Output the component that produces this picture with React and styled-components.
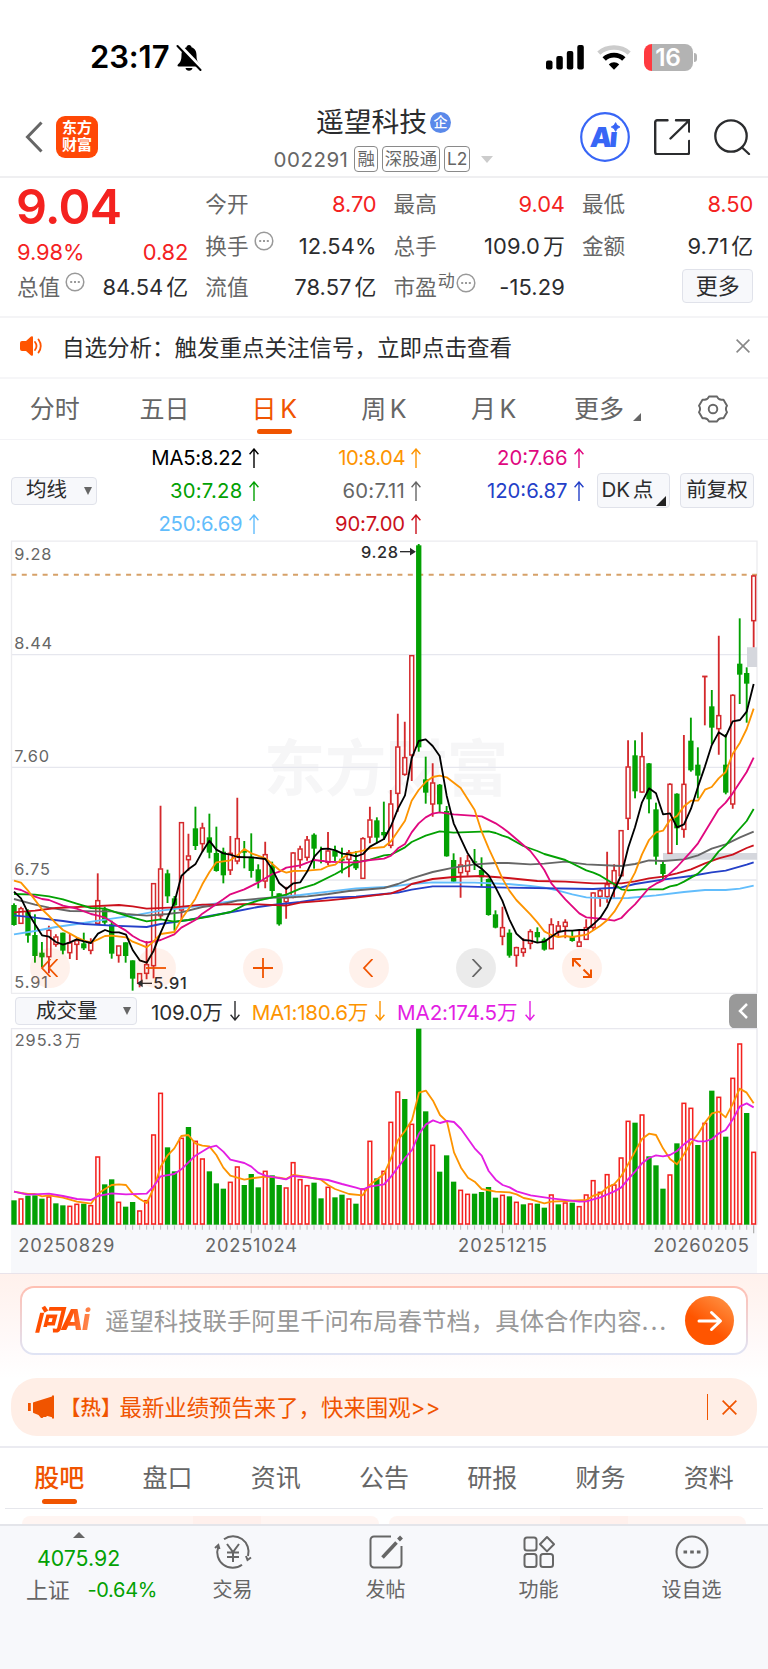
import React from "react";
import styled, { createGlobalStyle } from "styled-components";

const Global = createGlobalStyle`
  *, *::before, *::after { box-sizing: border-box; }
  body {
    margin: 0;
    background: #fff;
    color: #2b2c2e;
    font-family: Inter, "Noto Sans CJK SC", sans-serif;
  }
  svg { display: block; flex: none; }
`;

const RED = "#f4221f";
const GREEN = "#03a103";
const ORANGE = "#f05400";

const Page = styled.div`
  width: 768px;
  height: 1669px;
  overflow: hidden;
  display: flex;
  flex-direction: column;
  background: #fff;
`;

/* ---------- status bar ---------- */
const StatusBar = styled.div`
  height: 100px;
  padding: 14px 71px 0 90px;
  display: flex;
  align-items: center;
  justify-content: space-between;
`;
const StatusSide = styled.div`
  display: flex;
  align-items: center;
  gap: ${(p) => p.$gap}px;
`;
const Clock = styled.span`
  font-size: 31px;
  font-weight: 600;
  color: #000;
  letter-spacing: -0.1px;
  margin-top: -1px;
`;
const Battery = styled.div`
  width: 49px;
  height: 27px;
  border-radius: 8px;
  background: linear-gradient(90deg, #ff3a40 8px, #b3b3b3 8px);
  color: #fff;
  font-size: 24.5px;
  font-weight: 600;
  line-height: 27px;
  text-align: center;
  letter-spacing: -0.3px;
`;
const BatteryCap = styled.div`
  width: 3px;
  height: 9px;
  margin-left: 1.5px;
  border-radius: 0 3px 3px 0;
  background: #b3b3b3;
`;

/* ---------- header ---------- */
const Header = styled.header`
  height: 78px;
  padding: 0 17px 0 25px;
  border-bottom: 2px solid #efeff1;
  display: grid;
  grid-template-columns: 230px 1fr 230px;
`;
const HeaderSide = styled.div`
  display: flex;
  align-items: center;
  gap: ${(p) => p.$gap}px;
  justify-content: ${(p) => (p.$end ? "flex-end" : "flex-start")};
  padding-bottom: 2px;
`;
const Logo = styled.div`
  width: 42px;
  height: 42px;
  border-radius: 9px;
  background: #ff4806;
  color: #fff;
  font-size: 15px;
  line-height: 17px;
  font-weight: 700;
  display: flex;
  flex-direction: column;
  align-items: center;
  justify-content: center;
  padding-bottom: 2px;
`;
const TitleBlock = styled.div`
  display: flex;
  flex-direction: column;
  align-items: center;
  margin: 0 2px 0 -7px;
`;
const TitleLine = styled.div`
  height: 44px;
  display: flex;
  align-items: center;
  gap: 3px;
`;
const Title = styled.h1`
  margin: 0;
  font-size: 27.8px;
  font-weight: 400;
  line-height: 44px;
`;
const Badge = styled.span`
  width: 21px;
  height: 21px;
  border-radius: 50%;
  background: #5a89ea;
  color: #fff;
  font-size: 14px;
  font-weight: 500;
  line-height: 20px;
  text-align: center;
`;
const CodeLine = styled.div`
  height: 30px;
  display: flex;
  align-items: center;
  gap: 4px;
  color: #666;
`;
const Code = styled.span`
  font-size: 20.5px;
  letter-spacing: 0.5px;
  margin-right: 2px;
`;
const Tag = styled.span`
  height: 26px;
  padding: 0 2px;
  border: 1.5px solid #8a8a8a;
  border-radius: 4px;
  font-size: 17.4px;
  line-height: 23px;
`;

/* ---------- quote ---------- */
const Quote = styled.section`
  height: 140px;
  padding: 5px 15px 0 17px;
  border-bottom: 2px solid #f4f4f6;
  display: grid;
  grid-template-columns: repeat(4, 171.3px);
  column-gap: 17px;
`;
const QuoteCol = styled.div`
  display: flex;
  flex-direction: column;
`;
const Price = styled.div`
  height: 50px;
  font-size: 48.5px;
  font-weight: 600;
  line-height: 48px;
  margin-left: -1px;
  color: ${RED};
  letter-spacing: -0.7px;
`;
const QuoteRow = styled.div`
  height: ${(p) => p.$h || 42}px;
  display: flex;
  align-items: center;
  justify-content: space-between;
  white-space: nowrap;
`;
const Label = styled.span`
  display: flex;
  align-items: center;
  gap: 5px;
  font-size: 21.6px;
  line-height: 30px;
  color: #666;
`;
const Raised = styled.span`
  display: flex;
  align-items: center;
  gap: 1px;
  font-size: 17px;
  margin: -12px 0 0 -4px;
`;
const Value = styled.span`
  font-size: 21.9px;
  line-height: 30px;
  letter-spacing: ${(p) => (p.$up ? -0.1 : 0.1)}px;
  color: ${(p) => (p.$up ? RED : "#2b2c2e")};
`;
const Unit = styled.span`
  margin-left: 3px;
`;
const SoftButton = styled.button`
  font: inherit;
  color: #2b2c2e;
  width: ${(p) => p.$w}px;
  height: ${(p) => p.$h}px;
  padding: 0 ${(p) => p.$px || 0}px;
  border: 1.5px solid #e0e2ea;
  border-radius: 4px;
  background: #f7f8fb;
  font-size: ${(p) => p.$size}px;
  line-height: 1;
  word-spacing: -3px;
  display: flex;
  align-items: center;
  justify-content: ${(p) => p.$justify || "center"};
  white-space: nowrap;
`;

/* ---------- notice ---------- */
const Notice = styled.section`
  height: 61px;
  padding: 0 18px 3px 20px;
  border-bottom: 2px solid #f6f6f8;
  display: flex;
  align-items: center;
`;
const NoticeText = styled.p`
  margin: 0 auto 0 19px;
  font-size: 22.5px;
`;

/* ---------- tabs ---------- */
const Tabs = styled.nav`
  height: ${(p) => p.$h}px;
  margin: 0 ${(p) => p.$inset || 0}px;
  border-bottom: 1.5px solid ${(p) => p.$line};
  display: grid;
  grid-template-columns: repeat(7, 1fr);
`;
const Tab = styled.div`
  display: flex;
  flex-direction: column;
  align-items: center;
  justify-content: flex-end;
  gap: ${(p) => p.$gap}px;
  padding-bottom: ${(p) => p.$pb}px;
  font-size: 25px;
  line-height: 36px;
  color: ${(p) => (p.$on ? ORANGE : "#666")};
  font-weight: ${(p) => (p.$on && p.$strong ? 500 : 400)};
  &::after {
    content: "";
    width: 35px;
    height: 5.5px;
    border-radius: 2.5px;
    background: ${(p) => (p.$on ? ORANGE : "transparent")};
  }
`;
const TabLabel = styled.span`
  display: flex;
  align-items: center;
  justify-content: center;
  height: 36px;
  word-spacing: -3.5px;
  padding-left: ${(p) => p.$shift || 0}px;
`;

/* ---------- moving averages ---------- */
const Averages = styled.section`
  height: 100px;
  padding: 1px 14px 0 11px;
  display: flex;
  align-items: center;
`;
const AverageGrid = styled.div`
  display: grid;
  grid-template-columns: 161.5px 162.5px 162.5px;
  grid-auto-rows: 33px;
  margin-right: 13.5px;
`;
const Average = styled.div`
  display: flex;
  align-items: center;
  justify-content: flex-end;
  gap: 6px;
  font-size: 20.3px;
  letter-spacing: ${(p) => p.$ls}px;
  color: ${(p) => p.$c};
`;
const ButtonPair = styled.div`
  display: flex;
  gap: 10px;
`;

/* ---------- chart ---------- */
const ChartBox = styled.section`
  position: relative;
  height: 454px;
`;
const ChartControls = styled.div`
  position: absolute;
  left: 30px;
  bottom: 6px;
  display: flex;
  gap: 66.4px;
`;
const RoundControl = styled.div`
  width: 40px;
  height: 40px;
  border-radius: 50%;
  background: ${(p) => (p.$muted ? "rgba(0,0,0,.08)" : "rgba(255,80,0,.08)")};
  color: ${(p) => (p.$muted ? "#666" : ORANGE)};
  display: flex;
  align-items: center;
  justify-content: center;
`;
const VolumeBar = styled.div`
  height: 34px;
  padding-left: 15px;
  margin-right: 11px;
  display: flex;
  align-items: center;
  font-size: 20.6px;
`;
const VolumeStat = styled.span`
  display: flex;
  align-items: center;
  gap: 7px;
  margin-left: ${(p) => p.$ml}px;
  color: ${(p) => p.$c};
  letter-spacing: ${(p) => p.$ls || 0}px;
  white-space: nowrap;
`;
const Collapse = styled.div`
  width: 28px;
  height: 35px;
  margin-left: auto;
  border-radius: 7px 0 0 7px;
  background: #999;
  display: flex;
  align-items: center;
  justify-content: center;
`;

/* ---------- ask ai ---------- */
const AskSection = styled.section`
  height: 105px;
  padding: 12px 20px 0;
  border-top: 1.5px solid #e9e3ea;
  background: linear-gradient(180deg, #fff1ec 0%, #fffafa 70%, #fff 100%);
`;
const AskBorder = styled.div`
  height: 69px;
  padding: 2px;
  border-radius: 14px;
  background: linear-gradient(180deg, #ffbfb2, #dfe4f5);
`;
const AskBox = styled.div`
  height: 65px;
  border-radius: 12px;
  background: #fff;
  padding: 0 12px;
  display: flex;
  align-items: center;
`;
const AskLogo = styled.span`
  width: 59px;
  font-size: 28.5px;
  line-height: 40px;
  margin-top: -1px;
  font-weight: 800;
  font-style: italic;
  letter-spacing: -1.2px;
  background: linear-gradient(100deg, #ff4e00 55%, #ff9a6a);
  background-clip: text;
  -webkit-text-fill-color: transparent;
  white-space: nowrap;
`;
const AskText = styled.span`
  margin: -3px auto 0 12px;
  font-size: 24.4px;
  color: #999;
  white-space: nowrap;
`;
const Dots = styled.span`
  letter-spacing: 1.8px;
`;
const SendButton = styled.div`
  width: 49px;
  height: 49px;
  border-radius: 50%;
  background: linear-gradient(215deg, #ff9a4d 0%, #ff5500 60%);
  display: flex;
  align-items: center;
  justify-content: center;
`;

/* ---------- hot banner ---------- */
const HotBanner = styled.section`
  height: 58px;
  margin: 0 11px 10px;
  padding: 0 20px 0 17px;
  border-radius: 26px;
  background: #ffeee6;
  color: ${ORANGE};
  font-size: 22.4px;
  display: flex;
  align-items: center;
`;
const HotTag = styled.span`
  margin: -2px 0 0 5px;
  font-weight: 500;
  font-size: 20.5px;
`;
const HotText = styled.span`
  margin: -2px auto 0 -2px;
`;
const Divider = styled.i`
  width: 1.5px;
  height: 26px;
  margin-right: 14px;
  background: ${ORANGE};
`;
const TabsTop = styled.div`
  border-top: 2px solid #ebebf1;
`;
const CardStrip = styled.div`
  height: 15px;
  padding: 7px 22px 0;
  display: grid;
  grid-template-columns: 1fr 1fr;
  gap: 10px;
`;
const CardTop = styled.div`
  border-radius: 12px 12px 0 0;
  background: linear-gradient(90deg, #fff5f2 48%, #fff0ec 48% 67%, #fff5f2 67%);
`;

/* ---------- bottom nav ---------- */
const BottomNav = styled.nav`
  flex: 1;
  border-top: 2px solid #e4e5ea;
  background: #f7f8fb;
  display: grid;
  grid-template-columns: 156px repeat(4, 153px);
`;
const IndexCell = styled.div`
  padding: 6px 0 0 26px;
  color: ${GREEN};
  font-size: 21.3px;
  white-space: nowrap;
`;
const IndexArrow = styled.div`
  height: 6px;
  width: 106px;
  display: flex;
  justify-content: center;
`;
const IndexValue = styled.div`
  padding-left: 11px;
  line-height: 40px;
`;
const IndexChange = styled.div`
  display: flex;
  gap: 18px;
  line-height: 24px;
  font-size: 20px;
  letter-spacing: -0.3px;
  span { color: #666; font-size: 22px; }
`;
const NavItem = styled.div`
  padding-top: 8px;
  display: flex;
  flex-direction: column;
  align-items: center;
  gap: 4px;
  font-size: 20px;
  line-height: 32px;
  color: #666;
`;

/* ---------- small drawings ---------- */
const Line = ({ w, h, vb, d, sw = 2, color = "currentColor", children, ...rest }) => (
  <svg width={w} height={h} viewBox={vb || `0 0 ${w} ${h}`} fill="none" stroke={color} strokeWidth={sw} {...rest}>
    {d && <path d={d} />}
    {children}
  </svg>
);
const RaisedDots = styled(Line)`
  margin-top: ${(p) => p.$top}px;
`;
const MoreDots = ({ top = -10 }) => (
  <RaisedDots w={20} h={20} sw={1.5} color="#999" $top={top}>
    <circle cx="10" cy="10" r="8.8" />
    <path d="M5.2 10h2M9 10h2M12.8 10h2" strokeWidth="2" />
  </RaisedDots>
);
const Close = ({ s = 14, color = "#888", sw = 1.6 }) => (
  <Line w={s} h={s} vb="0 0 14 14" sw={sw} color={color} d="M.6.6l12.8 12.8M13.4.6L.6 13.4" />
);
const Arrow = ({ down }) => (
  <Line w={10} h={20} sw={1.4} d={down ? "M5 0v19M.6 13.8L5 19l4.4-5.2" : "M5 20V1M.6 6.2L5 1l4.4 5.2"} />
);
const CaretSvg = styled.svg`
  margin-right: ${(p) => p.$pull}px;
`;
const Caret = ({ pull }) => (
  <CaretSvg $pull={pull} width="8" height="8" viewBox="0 0 8 8"><path d="M0 0h8L4 8z" fill="#666" /></CaretSvg>
);
const CornerSvg = styled.svg`
  margin: ${(p) => p.$m};
`;
const Corner = ({ s, m, color }) => (
  <CornerSvg $m={m} width={s} height={s} viewBox="0 0 10 10"><path d="M10 0v10H0z" fill={color} /></CornerSvg>
);

/* ---------- chart data: [up, high, bodyTop, bodyBottom, low] ---------- */
const candles = [
  [0,1120,1125,1185,1187],[1,1130,1135,1180,1180],[0,1138,1145,1217,1238],[0,1153,1215,1278,1298],[0,1236,1268,1282,1312],
  [1,1187,1200,1280,1330],[1,1213,1220,1243,1250],[0,1208,1208,1262,1273],[1,1210,1238,1268,1287],[1,1225,1231,1243,1290],
  [0,1208,1240,1255,1260],[1,1225,1237,1261,1273],[1,1030,1111,1180,1180],[0,1130,1138,1178,1185],[0,1172,1183,1271,1286],
  [1,1247,1247,1276,1298],[0,1237,1237,1278,1298],[0,1291,1291,1346,1382],[1,1330,1330,1360,1372],[1,1233,1303,1330,1348],
  [1,1060,1060,1307,1345],[1,827,1016,1157,1168],[0,1019,1030,1099,1119],[0,1098,1105,1126,1202],[1,877,877,1140,1175],
  [1,911,977,989,1022],[0,830,895,948,960],[1,878,893,941,965],[0,851,922,968,985],[0,890,969,1023,1025],
  [0,953,965,1036,1060],[1,918,969,1020,1035],[1,803,925,993,1003],[0,933,962,968,1015],[0,910,980,1023,1043],
  [0,1003,1018,1055,1075],[1,935,973,1053,1075],[0,995,1007,1083,1100],[0,1090,1090,1183,1187],[1,1070,1103,1115,1166],
  [1,966,968,1102,1105],[1,947,956,989,1015],[1,918,929,982,992],[0,910,914,956,1016],[0,950,990,994,1000],
  [1,906,962,997,1005],[0,947,962,980,993],[0,953,986,992,1030],[1,960,967,988,1042],[0,963,990,1015,1020],
  [1,922,925,1045,1047],[1,830,869,921,940],[0,862,871,923,940],[0,815,906,916,930],[1,780,821,946,955],
  [1,551,650,790,845],[1,575,682,733,737],[1,375,376,675,753],[0,42,46,652,665],[0,680,748,788,821],
  [1,700,758,822,860],[0,762,764,823,848],[0,828,843,979,980],[0,970,990,1055,1058],[1,982,1004,1028,1103],
  [1,975,992,1024,1037],[0,957,994,998,1020],[0,982,1020,1042,1070],[0,1045,1047,1155,1157],[0,1141,1153,1193,1195],
  [1,1130,1192,1219,1246],[0,1198,1208,1277,1283],[1,1250,1252,1276,1310],[1,1225,1255,1267,1280],[1,1198,1204,1240,1258],
  [0,1192,1206,1222,1237],[0,1223,1228,1259,1262],[1,1165,1183,1256,1258],[1,1173,1187,1204,1220],[1,1168,1176,1189,1225],
  [0,1200,1218,1233,1235],[1,1200,1235,1249,1250],[1,1168,1192,1228,1230],[1,1087,1088,1192,1203],[1,1075,1081,1099,1130],
  [1,965,1063,1100,1118],[1,1003,1021,1060,1105],[1,900,901,1037,1040],[1,631,710,865,900],[0,631,676,784,805],
  [1,607,679,786,788],[0,699,700,808,850],[0,818,838,980,1004],[0,990,1002,1032,1048],[1,760,762,970,970],
  [0,790,791,895,945],[1,615,762,898,923],[0,563,632,721,725],[0,652,704,737,805],[1,438,438,440,586],
  [0,480,529,593,643],[1,317,556,596,674],[0,612,704,788,793],[1,493,495,822,836],[0,265,401,434,522],
  [0,412,429,461,578],[1,135,137,272,352],
];

const volumes =
  "G646 R640 G632 G631 G641 R634 G655 G661 R662 R656 G656 R660 R514 G598 G583 R650 G665 G651 R676 R645 R448 R323 G487 G559 R458 G426 R467 R520 G559 G595 G611 R590 R544 G600 G567 G607 R557 G571 G600 R607 R531 R582 R600 G593 G640 R605 G637 G629 R640 G656 R610 R467 G580 R557 R410 R319 G342 R416 G131 G379 R479 G560 G511 G590 R614 R626 G626 G621 G606 G638 R629 G634 R650 G658 R655 G656 G668 R628 G658 R652 G653 R663 R628 R585 R620 R567 R598 R517 R407 G413 R388 G514 G541 G611 R568 G475 R353 R368 G480 R413 G317 R335 G455 R278 R175 G384 R500".split(" ");

const averageLines = [
  ["#62bdfc", "42,1213 105,1203 168,1191 231,1182 315,1169 398,1157 482,1142 565,1132 628,1123 712,1111 774,1110 817,1103 901,1095 985,1085 1068,1075 1173,1070 1235,1062 1298,1057 1424,1058 1524,1062 1591,1068 1633,1073 1675,1082 1717,1093 1759,1102 1822,1105 1885,1104 1968,1096 2052,1086 2115,1080 2177,1080 2220,1076 2261,1067"],
  ["#2440c8", "42,1156 105,1163 189,1173 252,1182 335,1187 440,1191 482,1182 565,1170 628,1158 712,1143 774,1131 817,1125 901,1116 985,1103 1068,1100 1152,1092 1194,1088 1235,1079 1298,1069 1382,1069 1487,1072 1524,1073 1780,1077 1864,1072 1905,1062 1989,1049 2073,1038 2135,1027 2177,1022 2240,1004 2261,997"],
  ["#666", "42,1107 105,1124 147,1133 210,1143 294,1144 335,1144 378,1152 440,1157 502,1152 544,1147 607,1131 670,1122 712,1112 774,1106 817,1102 859,1103 922,1099 985,1092 1047,1083 1152,1074 1194,1062 1235,1045 1298,1026 1361,1013 1424,1003 1487,999 1524,999 1591,1003 1633,1001 1696,995 1759,1003 1864,1008 1905,1002 1947,991 1989,993 2052,988 2094,976 2135,956 2177,943 2220,922 2261,905"],
  ["#cb111c", "42,1147 105,1142 168,1134 273,1129 357,1125 398,1129 440,1136 523,1132 607,1124 691,1123 754,1122 859,1127 901,1118 985,1111 1068,1103 1173,1090 1215,1075 1235,1062 1298,1047 1361,1041 1445,1038 1524,1044 1612,1053 1696,1055 1780,1060 1864,1060 1905,1054 1947,1045 1989,1040 2031,1030 2073,1018 2115,1000 2156,985 2198,974 2240,954 2261,946"],
  [GREEN, "42,1092 105,1094 147,1099 189,1108 230,1121 273,1134 315,1136 357,1150 398,1163 440,1174 482,1168 523,1175 565,1170 628,1160 691,1146 712,1136 733,1125 774,1112 817,1102 859,1094 901,1076 943,1063 1006,1032 1068,997 1110,989 1152,976 1173,974 1215,952 1235,936 1277,917 1319,904 1361,908 1466,904 1487,909 1507,917 1524,922 1570,948 1612,963 1633,972 1696,990 1759,1021 1780,1028 1801,1037 1822,1050 1843,1063 1864,1078 1885,1081 1926,1078 1989,1078 2010,1069 2031,1065 2052,1055 2073,1043 2094,1031 2135,991 2156,964 2177,946 2198,920 2240,873 2261,837"],
  ["#e0087f", "42,1075 63,1080 105,1100 126,1107 147,1110 189,1127 230,1136 273,1152 294,1157 315,1163 335,1175 357,1190 378,1202 398,1218 419,1230 440,1238 482,1230 523,1213 544,1193 586,1170 607,1151 628,1137 649,1122 670,1108 691,1093 733,1078 774,1058 817,1032 838,1025 859,1013 901,1006 922,998 943,990 985,995 1027,997 1068,997 1110,990 1152,986 1173,977 1194,955 1215,942 1235,907 1256,880 1277,862 1298,851 1319,847 1361,853 1445,859 1487,880 1507,893 1524,906 1591,963 1612,990 1633,1020 1654,1060 1696,1108 1738,1150 1759,1162 1801,1166 1843,1172 1864,1164 1885,1142 1905,1123 1947,1074 1968,1061 1989,1051 2010,1030 2031,1011 2073,965 2094,940 2115,905 2156,838 2177,818 2198,790 2240,726 2261,683"],
  ["#fd9400", "42,1052 63,1058 84,1082 126,1138 147,1158 168,1180 189,1200 210,1211 230,1222 252,1232 273,1237 294,1228 315,1218 335,1217 378,1222 398,1235 419,1243 440,1252 461,1234 482,1212 523,1206 544,1168 565,1138 586,1106 607,1063 628,1027 649,997 691,991 712,976 733,957 754,970 796,985 817,1002 838,1020 859,1028 880,1023 922,1022 964,1018 985,1008 1006,1004 1027,985 1047,971 1089,962 1110,955 1152,951 1173,934 1215,872 1235,812 1256,780 1277,756 1298,741 1319,737 1340,742 1382,774 1424,840 1445,905 1466,955 1487,1000 1507,1045 1528,1082 1549,1110 1591,1153 1612,1177 1633,1204 1654,1215 1675,1221 1696,1218 1717,1221 1759,1214 1801,1187 1822,1170 1843,1145 1864,1110 1885,1065 1905,1028 1926,973 1947,930 1968,907 1989,902 2010,870 2031,858 2052,829 2073,812 2094,812 2115,779 2135,771 2156,745 2177,726 2198,672 2220,638 2240,597 2261,536"],
  ["#000", "42,1085 63,1105 84,1148 105,1183 126,1216 147,1220 168,1236 189,1244 210,1237 230,1228 252,1234 273,1239 294,1211 315,1200 335,1207 357,1207 378,1214 398,1260 419,1291 440,1298 461,1262 482,1208 502,1163 523,1118 544,1038 565,1018 586,1003 607,965 628,932 649,959 670,970 691,974 712,981 754,982 796,987 817,1018 838,1060 859,1077 880,1060 901,1057 922,1024 943,980 964,957 985,956 1006,961 1027,971 1047,973 1068,979 1089,972 1110,950 1152,927 1173,888 1194,836 1215,796 1235,685 1256,633 1277,628 1298,648 1319,678 1340,797 1361,880 1402,968 1424,1002 1445,1016 1466,1036 1487,1073 1507,1112 1528,1168 1549,1211 1570,1230 1591,1232 1612,1238 1633,1235 1654,1220 1675,1206 1696,1202 1717,1202 1738,1200 1759,1200 1780,1183 1801,1163 1822,1130 1843,1080 1864,1035 1885,952 1905,892 1926,817 1947,775 1968,790 1989,853 2010,850 2031,892 2052,883 2073,836 2094,770 2115,709 2135,646 2156,607 2177,620 2198,574 2220,570 2240,545 2261,462"],
];

const volumeLines = [
  ["#fd9400", "42,620 63,624 84,627 105,627 126,634 147,631 189,638 231,650 273,656 294,626 315,612 335,600 357,598 378,600 398,626 419,642 440,654 461,610 482,545 502,512 523,490 544,453 565,450 586,475 607,482 628,484 649,510 670,548 691,572 733,584 754,580 796,575 838,578 858,582 879,570 921,576 963,584 984,600 1005,612 1047,627 1088,631 1109,600 1152,567 1173,520 1194,465 1215,438 1236,405 1257,323 1278,317 1299,347 1320,390 1341,410 1362,502 1383,548 1404,578 1424,590 1445,612 1487,620 1529,622 1550,628 1571,639 1592,643 1633,655 1654,650 1696,648 1759,645 1780,632 1801,626 1822,607 1843,597 1864,573 1884,538 1905,500 1926,462 1947,446 1968,450 1989,490 2010,522 2031,538 2052,508 2073,474 2094,447 2115,413 2136,385 2157,380 2177,397 2199,355 2219,311 2240,323 2261,355"],
  ["#e31ee3", "42,620 84,629 147,626 189,633 231,642 273,645 294,633 335,625 378,628 440,626 461,604 482,574 523,567 544,553 586,512 628,487 649,482 670,500 691,524 733,534 754,545 774,563 796,572 858,583 879,573 921,577 984,585 1026,597 1068,608 1088,614 1109,605 1152,598 1173,575 1215,519 1236,495 1257,446 1278,418 1299,406 1320,414 1341,408 1362,411 1383,432 1424,490 1445,512 1466,558 1487,584 1508,600 1529,607 1550,619 1592,631 1654,640 1738,650 1759,649 1801,637 1843,619 1864,607 1884,583 1905,560 1926,535 1947,519 1968,511 1989,514 2010,510 2031,498 2052,478 2073,462 2094,469 2115,469 2136,462 2157,445 2177,435 2199,402 2219,365 2240,355 2261,367"],
];

const xOf = (i) => 42 + i * 20.934;

function PriceChart() {
  return (
    <svg width="768" height="454" viewBox="0 30 2304 1362">
      <g fontFamily='"Noto Sans CJK SC"' fontWeight="700" fontSize="184" fill="#f6f6f7">
        <text x="792" y="782" textLength="732">东方财富</text>
      </g>
      <path d="M33 374H2271M33 712H2271M33 1050H2271" stroke="#e6e7ee" strokeWidth="4" />
      <path d="M34.5 1390V33.5H2271V1390M33 1390.5H2271" fill="none" stroke="#ececef" strokeWidth="4" />
      <path d="M34 134.5H2271" stroke="#d6a168" strokeWidth="6" strokeDasharray="15 16.3" />
      <path d="M2241 352h30v59h-30zM1989 969h282v20h-282z" fill="#d5d7dd" />
      {candles.map(([up, hi, top, bottom, lo], i) => {
        const x = xOf(i);
        return up ? (
          <g key={i} stroke="#d4292c" strokeWidth="4.5" fill="none">
            <path d={`M${x} ${hi}V${top}M${x} ${bottom}V${lo}`} strokeWidth="5.5" />
            <rect x={x - 5.8} y={top + 1} width="11.600" height={Math.max(bottom - top - 1, 1)} fill="#fff" />
          </g>
        ) : (
          <g key={i} fill={GREEN}>
            <rect x={x - 2.8} y={hi} width="5.600" height={lo - hi} />
            <rect x={x - 8} y={top} width="16" height={bottom - top} />
          </g>
        );
      })}
      {averageLines.map(([color, pts]) => (
        <polyline key={color} points={pts} fill="none" stroke={color} strokeWidth="5.500" strokeLinejoin="round" />
      ))}
      <g fontSize="49" fill="#666">
        <text x="43" y="90" textLength="111">9.28</text>
        <text x="43" y="357" textLength="113">8.44</text>
        <text x="43" y="695" textLength="104">7.60</text>
        <text x="43" y="1034" textLength="107">6.75</text>
        <text x="43" y="1374" textLength="101">5.91</text>
      </g>
      <g fontSize="49" fill="#2b2c2e" fontWeight="500">
        <text x="1083" y="84" textLength="111">9.28</text>
        <text x="460" y="1378" textLength="100">5.91</text>
      </g>
      <g stroke="#2b2c2e" strokeWidth="4" fill="#2b2c2e">
        <path d="M1200 65H1234" /><path d="M1232 57l12 8-12 8z" />
        <path d="M456 1360H424" /><path d="M426 1352l-12 8 12 8z" />
      </g>
    </svg>
  );
}

function VolumeChart() {
  return (
    <svg width="768" height="245" viewBox="0 129 2304 735">
      <rect x="33" y="719" width="2238" height="145" fill="#f7f8fb" />
      <path d="M34.5 719V131H2271V719" fill="none" stroke="#e8e8ee" strokeWidth="4" />
      <path d="M33 719H2271" stroke="#e2e3e9" strokeWidth="3" />
      {volumes.map((v, i) => {
        const y = Number(v.slice(1));
        return v[0] === "R" ? (
          <rect key={i} x={xOf(i) - 5.5} y={y + 2} width="11" height={715 - y} fill="#fff" stroke="#f4221f" strokeWidth="4.600" />
        ) : (
          <rect key={i} x={xOf(i) - 8} y={y} width="16" height={719 - y} fill={GREEN} />
        );
      })}
      {volumeLines.map(([color, pts]) => (
        <polyline key={color} points={pts} fill="none" stroke={color} strokeWidth="5.500" strokeLinejoin="round" />
      ))}
      {volumes.map((_, i) => {
        const major = i === 34 || i === 70 || i === 106;
        return i > 15 && <path key={i} d={`M${xOf(i)} 721V${major ? 745 : 734}`} stroke={major ? "#aaa" : "#c2c3c6"} strokeWidth="3.5" />;
      })}
      <text x="44" y="182" fontSize="49" fill="#666" textLength="143">295.3</text>
      <text x="195" y="182" fontSize="48" fill="#666">万</text>
      <g fontSize="55" fill="#666">
        <text x="55" y="802" textLength="288">20250829</text>
        <text x="615" y="802" textLength="276">20251024</text>
        <text x="1374" y="802" textLength="267">20251215</text>
        <text x="1960" y="802" textLength="287">20260205</text>
      </g>
    </svg>
  );
}

const mainTabs = ["分时", "五日", "日 K", "周 K", "月 K"];
const infoTabs = ["股吧", "盘口", "资讯", "公告", "研报", "财务", "资料"];
/* label, colour, tracking */
const averages = [
  ["MA5:8.22", "#000", -0.25], ["10:8.04", "#fd9400", -0.5], ["20:7.66", "#e0087f", 0],
  ["30:7.28", GREEN, 0.25], ["60:7.11", "#666", 0.25], ["120:6.87", "#2440c8", 0],
  ["250:6.69", "#62bdfc", -0.2], ["90:7.00", "#cb111c", -0.15],
];

export default function App() {
  return (
    <Page>
      <Global />
      <StatusBar>
        <StatusSide $gap={7}>
          <Clock>23:17</Clock>
          <svg width="26" height="27" viewBox="0 0 26 27">
            <path d="M13 1c1.600 0 2.300 1 2.500 2.200C19 4.400 20.500 7.500 20.500 11c0 6 1.500 7.500 3.600 9.500.8 1 .3 2-.8 2H2.700c-1.100 0-1.600-1-.8-2C4 18.500 5.500 17 5.500 11c0-3.500 1.500-6.600 5-7.800C10.700 2 11.400 1 13 1zM9.500 24h7c-.4 1.700-1.700 2.700-3.500 2.700S9.900 25.700 9.500 24z" fill="#000" />
            <path d="M2.800.8L26 25" stroke="#fff" strokeWidth="4" />
            <path d="M1.500 2L24.500 26" stroke="#000" strokeWidth="2" strokeLinecap="round" />
          </svg>
        </StatusSide>
        <StatusSide $gap={13}>
          <svg width="38" height="25" viewBox="0 0 38 25">
            <rect x="0" y="15.500" width="6.500" height="9" rx="2" /><rect x="10.300" y="11" width="6.500" height="13.500" rx="2" />
            <rect x="20.800" y="6" width="6.500" height="18.500" rx="2" /><rect x="31.300" y="0" width="6.500" height="24.500" rx="2" />
          </svg>
          <svg width="34" height="25" viewBox="0 0 34 25" fill="none">
            <path d="M1.800 8.200C10 .6 24 .6 32.200 8.200" stroke="#ccc" strokeWidth="4.500" />
            <path d="M7.200 14C12.500 8.800 21.500 8.800 26.800 14" stroke="#000" strokeWidth="4.800" />
            <path d="M11.800 19.500c3-3 7.400-3 10.400 0L17 24.800z" fill="#000" />
          </svg>
          <StatusSide $gap={0}><Battery>16</Battery><BatteryCap /></StatusSide>
        </StatusSide>
      </StatusBar>

      <Header>
        <HeaderSide $gap={13}>
          <Line w={18} h={32} sw={3} color="#666" d="M16.500 1.500L2.500 16l14 14.500" />
          <Logo><span>东方</span><span>财富</span></Logo>
        </HeaderSide>
        <TitleBlock>
          <TitleLine><Title>遥望科技</Title><Badge>企</Badge></TitleLine>
          <CodeLine>
            <Code>002291</Code><Tag>融</Tag><Tag>深股通</Tag><Tag>L2</Tag>
            <CornerSvg $m="0 0 0 7px" width="12" height="7" viewBox="0 0 12 7"><path d="M0 0h12L6 7z" fill="#ccc" /></CornerSvg>
          </CodeLine>
        </TitleBlock>
        <HeaderSide $end $gap={24}>
          <svg width="50" height="50" viewBox="0 0 50 50">
            <circle cx="25" cy="25" r="23.800" fill="none" stroke="#3866f6" strokeWidth="2.200" />
            <text x="12.500" y="34.800" fontSize="27.500" fontWeight="900" fill="#3866f6" textLength="27.500" transform="skewX(-5)">Ai</text>
            <path d="M29.500 9.500h12v10h-12z" fill="#fff" />
            <path d="M35.600 10.600q1 3.400 4.400 4.400q-3.400 1-4.400 4.400q-1-3.400-4.400-4.400q3.400-1 4.400-4.400z" fill="#3866f6" stroke="#3866f6" strokeWidth=".8" />
          </svg>
          <Line w={36} h={36} sw={2.400} color="#2b2c2e" strokeLinecap="round" d="M13.500 1.200H3.200a2 2 0 0 0-2 2v30a2 2 0 0 0 2 2h30a2 2 0 0 0 2-2V22M22 1.200h13.200V12.500M34.500 2L16.500 19.500" />
          <Line w={37} h={36} sw={2.300} color="#2b2c2e" strokeLinecap="round" d="M28 28.500L35 35"><circle cx="17" cy="17" r="15.700" /></Line>
        </HeaderSide>
      </Header>

      <Quote>
        <QuoteCol>
          <Price>9.04</Price>
          <QuoteRow $h={37}><Value $up>9.98%</Value><Value $up>0.82</Value></QuoteRow>
          <QuoteRow $h={34}><Label>总值<MoreDots /></Label><Value>84.54<Unit>亿</Unit></Value></QuoteRow>
        </QuoteCol>
        <QuoteCol>
          <QuoteRow><Label>今开</Label><Value $up>8.70</Value></QuoteRow>
          <QuoteRow><Label>换手<MoreDots /></Label><Value>12.54%</Value></QuoteRow>
          <QuoteRow $h={40}><Label>流值</Label><Value>78.57<Unit>亿</Unit></Value></QuoteRow>
        </QuoteCol>
        <QuoteCol>
          <QuoteRow><Label>最高</Label><Value $up>9.04</Value></QuoteRow>
          <QuoteRow><Label>总手</Label><Value>109.0<Unit>万</Unit></Value></QuoteRow>
          <QuoteRow $h={40}><Label>市盈<Raised>动<MoreDots top={3} /></Raised></Label><Value>-15.29</Value></QuoteRow>
        </QuoteCol>
        <QuoteCol>
          <QuoteRow><Label>最低</Label><Value $up>8.50</Value></QuoteRow>
          <QuoteRow><Label>金额</Label><Value>9.71<Unit>亿</Unit></Value></QuoteRow>
          <QuoteRow $h={38}><span /><SoftButton $w={71} $h={34} $size={22}>更多</SoftButton></QuoteRow>
        </QuoteCol>
      </Quote>

      <Notice>
        <svg width="23" height="20" viewBox="0 0 23 20">
          <path d="M0 7q0-2 2-2h4l5-4.500q2-1 2 1v17q0 2-2 1L6 15H2q-2 0-2-2z" fill="#ff5400" />
          <path d="M15 6q3 4 0 8M18.500 3.500q4.500 6.500 0 13" fill="none" stroke="#ff5400" strokeWidth="1.800" strokeLinecap="round" />
        </svg>
        <NoticeText>自选分析：触发重点关注信号，立即点击查看</NoticeText>
        <Close />
      </Notice>

      <Tabs $h={61} $line="#f3f3f6">
        {mainTabs.map((t, i) => (
          <Tab key={t} $on={i === 2} $gap={2} $pb={5}><TabLabel>{t}</TabLabel></Tab>
        ))}
        <Tab $gap={2} $pb={5}>
          <TabLabel $shift={8}>更多<Corner s={8} m="17px 0 0 9px" color="#666" /></TabLabel>
        </Tab>
        <Tab $gap={2} $pb={5}>
          <TabLabel>
            <Line w={30} h={28} sw={1.9} strokeLinejoin="round" d="M11 1.500h8q1.500 3.600 5 3.300h1.500l3.500 6q-2.200 3.200 0 6.400l-3.500 6H24q-3.500-.3-5 3.300h-8q-1.500-3.600-5-3.300H4.500l-3.500-6q2.200-3.200 0-6.400l3.500-6H6q3.500.3 5-3.300z"><circle cx="15" cy="14" r="4.300" /></Line>
          </TabLabel>
        </Tab>
      </Tabs>

      <Averages>
        <SoftButton $w={87} $h={28} $size={20.5} $px={14} $justify="space-between">均线<Caret pull={-10} /></SoftButton>
        <AverageGrid>
          {averages.map(([t, c, ls]) => <Average key={t} $c={c} $ls={ls}>{t}<Arrow /></Average>)}
        </AverageGrid>
        <ButtonPair>
          <SoftButton $w={73} $h={35} $size={20.5} $px={3.5} $justify="space-between">DK 点<Corner s={10} m="20px 0 0 0" color="#222" /></SoftButton>
          <SoftButton $w={74} $h={35} $size={20.5}>前复权</SoftButton>
        </ButtonPair>
      </Averages>

      <ChartBox>
        <PriceChart />
        <ChartControls>
          <RoundControl><Line w={18} h={18} sw={1.800} d="M9.500 0L1 9l8.500 9M16.500 0L8 9l8.500 9" /></RoundControl>
          <RoundControl><Line w={20} h={20} sw={1.800} d="M0 10h20" /></RoundControl>
          <RoundControl><Line w={20} h={20} sw={1.800} d="M0 10h20M10 0v20" /></RoundControl>
          <RoundControl><Line w={18} h={18} sw={1.800} d="M12.500 0L4 9l8.500 9" /></RoundControl>
          <RoundControl $muted><Line w={18} h={18} sw={1.800} d="M5.500 0L14 9l-8.500 9" /></RoundControl>
          <RoundControl><Line w={20} h={20} sw={2} d="M1 8.500V1h8M1 1l7.500 7.500M19 11.500V19h-8M19 19l-7.500-7.500" /></RoundControl>
        </ChartControls>
      </ChartBox>
      <VolumeBar>
        <SoftButton $w={122} $h={28} $size={20.5} $px={20} $justify="space-between">成交量<Caret pull={-15} /></SoftButton>
        <VolumeStat $ml={14} $c="#2b2c2e" $ls={-0.15}>109.0万<Arrow down /></VolumeStat>
        <VolumeStat $ml={12} $c="#fd9400" $ls={-0.25}>MA1:180.6万<Arrow down /></VolumeStat>
        <VolumeStat $ml={12} $c="#e31ee3" $ls={-0.1}>MA2:174.5万<Arrow down /></VolumeStat>
        <Collapse><Line w={10} h={16} sw={2.500} color="#fff" d="M9 1L2 8l7 7" /></Collapse>
      </VolumeBar>
      <VolumeChart />

      <AskSection>
        <AskBorder>
          <AskBox>
            <AskLogo>问Ai</AskLogo>
            <AskText>遥望科技联手阿里千问布局春节档，具体合作内容<Dots>...</Dots></AskText>
            <SendButton><Line w={26} h={22} sw={3} color="#fff" strokeLinecap="round" strokeLinejoin="round" d="M2 11h21M14.500 2.500L23.500 11l-9 8.500" /></SendButton>
          </AskBox>
        </AskBorder>
      </AskSection>

      <HotBanner>
        <svg width="27" height="24" viewBox="0 0 27 24">
          <path d="M0 8h2.800v8H0zM5 8q0-.6.600-.8L24 1.500V.5h2v23h-2v-1.200l-4.500-1.300h-1v1h-3l-1 1h-1.500l-2.500-3-5-2q-.5-.3-.5-.8z" fill={ORANGE} />
        </svg>
        <HotTag>【热】</HotTag>
        <HotText>最新业绩预告来了，快来围观&gt;&gt;</HotText>
        <Divider />
        <Close s={15} color={ORANGE} />
      </HotBanner>

      <TabsTop>
        <Tabs $h={60.5} $inset={5} $line="#e6e7ec">
          {infoTabs.map((t, i) => (
            <Tab key={t} $on={i === 0} $strong $gap={2.5} $pb={3.5}><TabLabel>{t}</TabLabel></Tab>
          ))}
        </Tabs>
      </TabsTop>
      <CardStrip><CardTop /><CardTop /></CardStrip>

      <BottomNav>
        <IndexCell>
          <IndexArrow><svg width="12" height="6" viewBox="0 0 12 6"><path d="M6 0l6 6H0z" fill="#666" /></svg></IndexArrow>
          <IndexValue>4075.92</IndexValue>
          <IndexChange><span>上证</span>-0.64%</IndexChange>
        </IndexCell>
        <NavItem>
          <Line w={38} h={36} sw={2}>
            <path d="M10 5.200A15.500 15.500 0 0 1 34 22M28 30.800A15.500 15.500 0 0 1 4.200 13M1 14l3.300-3 1.200 4M37 23.500L33.500 26 32 22" />
            <path d="M13 10l6 8 6-8M19 18v10M13 18.500h12M13 23h12" />
          </Line>
          交易
        </NavItem>
        <NavItem>
          <Line w={34} h={36} sw={2}>
            <path d="M22 2.500H5a3.500 3.500 0 0 0-3.500 3.500v24A3.500 3.500 0 0 0 5 33.500h24a3.500 3.500 0 0 0 3.500-3.500V12" />
            <path d="M13.500 23.500L27.500 8.500" strokeWidth="3.600" /><path d="M29.500 6l3-3" strokeWidth="4" />
          </Line>
          发帖
        </NavItem>
        <NavItem>
          <Line w={32} h={36} sw={2}>
            <rect x="1.500" y="3.500" width="12" height="13" rx="2.500" /><rect x="1.500" y="20" width="12" height="13" rx="2.500" />
            <rect x="17.500" y="20" width="12.500" height="13" rx="2.500" /><path d="M24 3l7 7.200-7 7.200-7-7.200z" strokeLinejoin="round" />
          </Line>
          功能
        </NavItem>
        <NavItem>
          <Line w={34} h={36} sw={2}><circle cx="17" cy="18" r="15.500" /><path d="M8.500 18h3.600M15.200 18h3.600M21.900 18h3.600" strokeWidth="3.200" /></Line>
          设自选
        </NavItem>
      </BottomNav>
    </Page>
  );
}
